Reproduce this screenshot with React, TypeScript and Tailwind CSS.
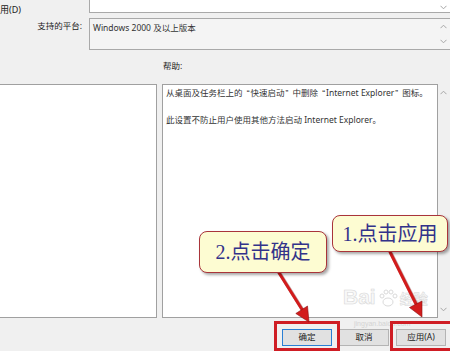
import React from "react";

function ChevDown() {
  return (
    <svg width="7" height="5" viewBox="0 0 7 5" className="block">
      <path d="M0.5 0.8 L3.5 3.8 L6.5 0.8" fill="none" stroke="#a6a6a6" strokeWidth="1" />
    </svg>
  );
}
function ChevUp() {
  return (
    <svg width="7" height="5" viewBox="0 0 7 5" className="block">
      <path d="M0.5 4.2 L3.5 1.2 L6.5 4.2" fill="none" stroke="#a6a6a6" strokeWidth="1" />
    </svg>
  );
}

function OpenQ() {
  return <span className="inline-block w-[8px] text-right pr-[1px] font-['Liberation_Sans',sans-serif]">“</span>;
}
function CloseQ() {
  return <span className="inline-block w-[8px] text-left pl-[1px] font-['Liberation_Sans',sans-serif]">”</span>;
}

export default function App() {
  return (
    <div className="relative w-[450px] h-[351px] overflow-hidden bg-[#f0f0f0] text-[8.5px] text-[#222] font-['Noto_Sans','Noto_Sans_CJK_SC',sans-serif]">
      {/* top area */}
      <div className="flex h-[84px]">
        <div className="w-[89px] flex flex-col">
          <div className="h-[17px] pt-[3px] leading-[13px] text-[9px]">用(D)</div>
          <div className="mt-[2px] pr-[7px] text-right leading-[13px]">支持的平台:</div>
        </div>
        <div className="w-[361px] flex flex-col">
          <div className="h-[13px] flex bg-white border-l border-b border-[#a9a9a9]">
            <div className="flex-1" />
            <div className="w-[12px] pr-[2px] flex items-center justify-center pt-[3px]">
              <ChevDown />
            </div>
          </div>
          <div className="mt-[5px] h-[32px] flex bg-[#f4f4f4] border-l border-t border-b border-[#a9a9a9]">
            <div className="flex-1 pl-[3px] pt-[2px] leading-[13px] text-[#333]">Windows 2000 及以上版本</div>
            <div className="w-[12px] pr-[2px] flex flex-col items-center justify-between pt-[5px] pb-[5px]">
              <ChevUp />
              <ChevDown />
            </div>
          </div>
          <div className="pl-[74px] pt-[9px] leading-[13px]">帮助:</div>
        </div>
      </div>

      {/* panels */}
      <div className="flex h-[234px]">
        <div className="w-[157px] bg-white border-t border-b border-r border-[#a0a0a0]" />
        <div className="w-[5px]" />
        <div className="w-[276px] bg-white border border-[#a0a0a0] pl-[3px] pt-[1px] leading-[13px] text-[#333]">
          <div className="whitespace-nowrap">
            从桌面及任务栏上的<OpenQ />快速启动<CloseQ />中删除<OpenQ />Internet Explorer<CloseQ />图标。
          </div>
          <div className="h-[13px]" />
          <div className="whitespace-nowrap">此设置不防止用户使用其他方法启动 Internet Explorer。</div>
        </div>
        <div className="flex-1 flex flex-col items-center justify-between pt-[6px] pb-[6px] pr-[1px]">
          <ChevUp />
          <ChevDown />
        </div>
      </div>

      {/* buttons */}
      <div className="flex h-[33px] pl-[282px] pt-[11px] gap-[7px]">
        <div className="w-[50px] h-[17px] flex items-center justify-center bg-[#e1e1e1] border border-[#2a7fd4]">确定</div>
        <div className="w-[50px] h-[17px] flex items-center justify-center bg-[#e1e1e1] border border-[#b4b4b4]">取消</div>
        <div className="w-[50px] h-[17px] flex items-center justify-center bg-[#e1e1e1] border border-[#b4b4b4]">应用(A)</div>
      </div>

      {/* watermark */}
      <div className="absolute left-[343px] top-[286px] flex items-end gap-[2px] pointer-events-none opacity-60">
        <span className="text-[21px] leading-[22px] font-bold text-[#f4f4f4] [-webkit-text-stroke:0.6px_#bdbdbd] font-['Liberation_Sans',sans-serif]">Bai</span>
        <svg width="20" height="20" viewBox="0 0 20 20">
          <g fill="none" stroke="#c2c2c2" strokeWidth="1">
            <ellipse cx="10" cy="14" rx="5" ry="4" />
            <circle cx="4" cy="8" r="2" />
            <circle cx="8" cy="4" r="2" />
            <circle cx="13" cy="4" r="2" />
            <circle cx="17" cy="8" r="2" />
          </g>
        </svg>
        <span className="text-[14px] leading-[18px] font-bold text-[#f4f4f4] [-webkit-text-stroke:0.5px_#bdbdbd]">经验</span>
      </div>
      <div className="absolute left-[354px] top-[320px] text-[7px] leading-[8px] text-[#c8c8c8] opacity-70 pointer-events-none font-['Liberation_Sans',sans-serif]">
        jingyan.baidu.com
      </div>

      {/* red highlight rectangles */}
      <div className="absolute left-[274px] top-[321px] w-[66px] h-[30px] border-[3px] border-[#cf1d24]" />
      <div className="absolute left-[390px] top-[321px] w-[64px] h-[30px] border-[3px] border-[#cf1d24]" />

      {/* arrows */}
      <svg className="absolute left-0 top-0 pointer-events-none" width="450" height="351" viewBox="0 0 450 351">
        <g stroke="#5a0c0c" strokeOpacity="0.35" strokeWidth="3.5" fill="none">
          <line x1="277" y1="269" x2="304" y2="312" />
          <line x1="391" y1="253" x2="418" y2="307" />
        </g>
        <g stroke="#d21c1c" strokeWidth="3" fill="none" strokeLinecap="round">
          <line x1="276" y1="268" x2="303" y2="311" />
          <line x1="390" y1="252" x2="417" y2="306" />
        </g>
        <polygon points="309,322 307.5,306 295.8,313.5" fill="#d21c1c" stroke="#8a1010" strokeWidth="0.6" />
        <polygon points="422,317 422,301 409.5,307.5" fill="#d21c1c" stroke="#8a1010" strokeWidth="0.6" />
      </svg>

      {/* callout 2 */}
      <div className="absolute left-[199px] top-[231px] w-[128px] h-[42px] rounded-[8px] border-[1.5px] border-[#a9343a] bg-[#fdfcd2] shadow-[2px_2px_3px_rgba(0,0,0,0.35)] flex items-center justify-center text-[20px] leading-[24px] text-[#32328a] font-['Liberation_Serif','Noto_Sans_CJK_SC',serif]">
        2.点击确定
      </div>
      {/* callout 1 */}
      <div className="absolute left-[332px] top-[215px] w-[116px] h-[37px] rounded-[8px] border-[1.5px] border-[#a9343a] bg-[#fdfcd2] shadow-[2px_2px_3px_rgba(0,0,0,0.35)] flex items-center justify-center text-[20px] leading-[24px] text-[#32328a] font-['Liberation_Serif','Noto_Sans_CJK_SC',serif]">
        1.点击应用
      </div>
    </div>
  );
}
